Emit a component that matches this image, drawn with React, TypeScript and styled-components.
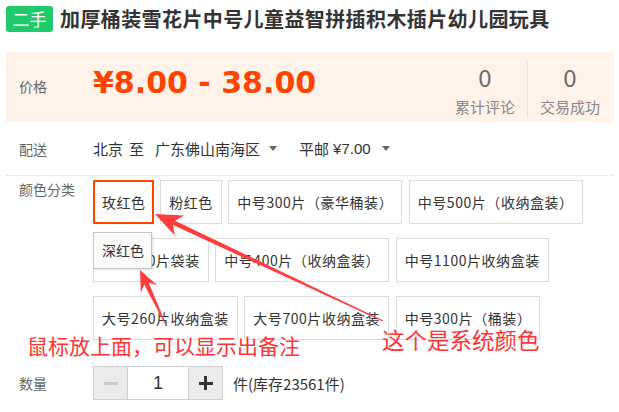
import styled, { createGlobalStyle, css } from "styled-components";

const GlobalStyle = createGlobalStyle`
    body {
        margin: 0;
        background: #fff;
        font-family: "Noto Sans CJK SC", "Liberation Sans", sans-serif;
        color: #333;
    }
`;

const options = [
    '玫红色',
    '粉红色',
    '中号300片（豪华桶装）',
    '中号500片（收纳盒装）',
    '小号200片袋装',
    '中号400片（收纳盒装）',
    '中号1100片收纳盒装',
    '大号260片收纳盒装',
    '大号700片收纳盒装',
    '中号300片（桶装）',
];

type Pt = [number, number];

// hand-drawn style arrow from a screenshot tool: thin tail, thick near the head
const Arrow = ({ tail, tip, head = 26, wing = 10 }: { tail: Pt; tip: Pt; head?: number; wing?: number }) => {
    const dx = tip[0] - tail[0];
    const dy = tip[1] - tail[1];
    const len = Math.hypot(dx, dy);
    const ux = dx / len, uy = dy / len;
    const nx = -uy, ny = ux;
    const at = (d: number, w: number): string =>
        `${tip[0] - ux * d + nx * w},${tip[1] - uy * d + ny * w}`;
    const pts = [
        at(len, 0.6),
        at(head - 6, 2.4),
        at(head, wing),
        at(0, 0),
        at(head, -wing),
        at(head - 6, -2.4),
        at(len, -0.6),
    ].join(' ');
    return <polygon points={pts} fill="#ff3d3d" />;
};

export default function App() {
    return (
        <Root>
            <GlobalStyle />
            <Page>
                <TitleRow>
                    <Badge>二手</Badge>
                    <Title>加厚桶装雪花片中号儿童益智拼插积木插片幼儿园玩具</Title>
                </TitleRow>

                <PriceBox>
                    <Label $top={27}>价格</Label>
                    <Price>¥8.00 - 38.00</Price>
                    <Stats>
                        <Stat>
                            <StatNum>0</StatNum>
                            <StatLabel>累计评论</StatLabel>
                        </Stat>
                        <Stat>
                            <StatNum>0</StatNum>
                            <StatLabel>交易成功</StatLabel>
                        </Stat>
                    </Stats>
                </PriceBox>

                <DeliveryRow>
                    <Label>配送</Label>
                    <Place>北京</Place>
                    <Place $gap={6}>至</Place>
                    <Place $gap={11}>广东佛山南海区</Place>
                    <Caret $gap={9} />
                    <Place $gap={22}>平邮</Place>
                    <Fee>¥7.00</Fee>
                    <Caret $gap={11} />
                </DeliveryRow>

                <ColorRow>
                    <Label $top={2}>颜色分类</Label>
                    <OptionList>
                        {options.map((opt, idx) => (
                            <Option key={opt} $selected={idx === 0}>{opt}</Option>
                        ))}
                        <Tip>深红色</Tip>
                    </OptionList>
                </ColorRow>

                <QtyRow>
                    <Label>数量</Label>
                    <Stepper>
                        <StepBtn><Minus /></StepBtn>
                        <QtyInput>1</QtyInput>
                        <StepBtn><Plus /></StepBtn>
                    </Stepper>
                    <Stock>件(库存23561件)</Stock>
                </QtyRow>
            </Page>

            <Arrows width="619" height="412" viewBox="0 0 619 412">
                <Arrow tail={[383, 321]} tip={[155, 214]} head={27} wing={11} />
                <Arrow tail={[165, 323]} tip={[140, 270]} head={21} wing={9} />
            </Arrows>
            <Note $left={27} $top={332} $size={21}>鼠标放上面，可以显示出备注</Note>
            <Note $left={382} $top={326} $size={22.5}>这个是系统颜色</Note>
        </Root>
    );
}

const Root = styled.div`
    position: relative;
    width: 619px;
    height: 412px;
    overflow: hidden;
`;

const Page = styled.div`
    width: 608px;
    margin: 0 6px;
    padding-top: 6px;
`;

const TitleRow = styled.div`
    display: flex;
    align-items: center;
    gap: 7px;
    height: 26px;
`;

const Badge = styled.span`
    display: flex;
    align-items: center;
    justify-content: center;
    width: 47px;
    height: 26px;
    border-radius: 3px;
    background: #1fca6c;
    color: #fff;
    font-size: 17px;
    line-height: 26px;
`;

const Title = styled.h1`
    margin: 0;
    font-size: 20px;
    font-weight: bold;
    letter-spacing: 0.4px;
    line-height: 26px;
    color: #333;
    white-space: nowrap;
`;

const Label = styled.div<{ $top?: number }>`
    width: 74px;
    flex-shrink: 0;
    margin-top: ${p => p.$top ?? 0}px;
    font-size: 14px;
    line-height: 14px;
    color: #666;
`;

const PriceBox = styled.div`
    display: flex;
    align-items: flex-start;
    height: 70px;
    margin-top: 20px;
    padding: 0 2px 0 13px;
    background: #fff2e8;
`;

const Price = styled.div`
    margin-top: 16px;
    font-family: "DejaVu Sans", "Liberation Sans", sans-serif;
    font-size: 30px;
    font-weight: bold;
    line-height: 30px;
    color: #ff4400;
    white-space: nowrap;
`;

const Stats = styled.div`
    display: flex;
    margin-left: auto;
    margin-top: 10px;
    height: 56px;
`;

const Stat = styled.div`
    display: flex;
    flex-direction: column;
    align-items: center;
    width: 84px;
    padding-top: 3px;
    & + & {
        border-left: 1px solid #f7dccb;
    }
`;

const StatNum = styled.div`
    font-size: 24px;
    line-height: 24px;
    color: #6c6c6c;
`;

const StatLabel = styled.div`
    margin-top: 10px;
    font-size: 15px;
    line-height: 15px;
    color: #888;
`;

const DeliveryRow = styled.div`
    display: flex;
    align-items: center;
    height: 53px;
    padding-left: 13px;
    border-bottom: 1px dotted #d8d8d8;
`;

const Place = styled.span<{ $gap?: number }>`
    margin-left: ${p => p.$gap ?? 0}px;
    font-size: 15px;
    line-height: 16px;
    color: #333;
`;

const Fee = styled.span`
    margin-left: 4px;
    font-family: "Liberation Sans", sans-serif;
    font-size: 15px;
    color: #333;
`;

const Caret = styled.span<{ $gap: number }>`
    margin-left: ${p => p.$gap}px;
    width: 0;
    height: 0;
    border-left: 4px solid transparent;
    border-right: 4px solid transparent;
    border-top: 5px solid #666;
`;

const ColorRow = styled.div`
    display: flex;
    align-items: flex-start;
    padding: 4px 0 0 13px;
`;

const OptionList = styled.div`
    position: relative;
    display: flex;
    flex-wrap: wrap;
    gap: 14px 6.5px;
    width: 521px;
`;

const Option = styled.div<{ $selected?: boolean }>`
    padding: 11px 8px 11px 8px;
    border: 1px solid #dcdcdc;
    background: #fff;
    font-size: 14px;
    letter-spacing: 0.55px;
    line-height: 20px;
    color: #333;
    white-space: nowrap;
    ${p => p.$selected && css`
        padding: 10px 6px 10px 7px;
        border: 2px solid #ff4400;
    `}
`;

const Tip = styled.div`
    position: absolute;
    left: 0;
    top: 52px;
    padding: 8px 7px 8px 8px;
    border: 1px solid #c4c4c4;
    background: #fafafa;
    box-shadow: 1px 1px 2px rgba(0, 0, 0, 0.12);
    font-size: 14px;
    line-height: 19px;
    color: #333;
`;

const QtyRow = styled.div`
    display: flex;
    align-items: center;
    height: 34px;
    margin-top: 26px;
    padding-left: 13px;
`;

const Stepper = styled.div`
    display: flex;
    height: 34px;
    border: 1px solid #cfcfcf;
    box-sizing: border-box;
`;

const StepBtn = styled.div`
    display: flex;
    align-items: center;
    justify-content: center;
    width: 33px;
    background: #ebebeb;
`;

const QtyInput = styled.div`
    width: 60px;
    border-left: 1px solid #cfcfcf;
    border-right: 1px solid #cfcfcf;
    background: #fff;
    font-family: "Liberation Sans", sans-serif;
    font-size: 18px;
    line-height: 32px;
    text-align: center;
    color: #333;
`;

const Minus = styled.span`
    width: 14px;
    height: 3px;
    background: #c9c9c9;
`;

const Plus = styled.span`
    position: relative;
    width: 14px;
    height: 14px;
    &::before, &::after {
        content: "";
        position: absolute;
        background: #333;
    }
    &::before {
        left: 0;
        top: 5.5px;
        width: 14px;
        height: 3px;
    }
    &::after {
        left: 5.5px;
        top: 0;
        width: 3px;
        height: 14px;
    }
`;

const Stock = styled.span`
    margin-left: 10px;
    font-size: 15px;
    color: #333;
`;

const Arrows = styled.svg`
    position: absolute;
    left: 0;
    top: 0;
    pointer-events: none;
`;

const Note = styled.div<{ $left: number; $top: number; $size: number }>`
    position: absolute;
    left: ${p => p.$left}px;
    top: ${p => p.$top}px;
    font-size: ${p => p.$size}px;
    line-height: 26px;
    color: #ff3333;
    white-space: nowrap;
    pointer-events: none;
`;
